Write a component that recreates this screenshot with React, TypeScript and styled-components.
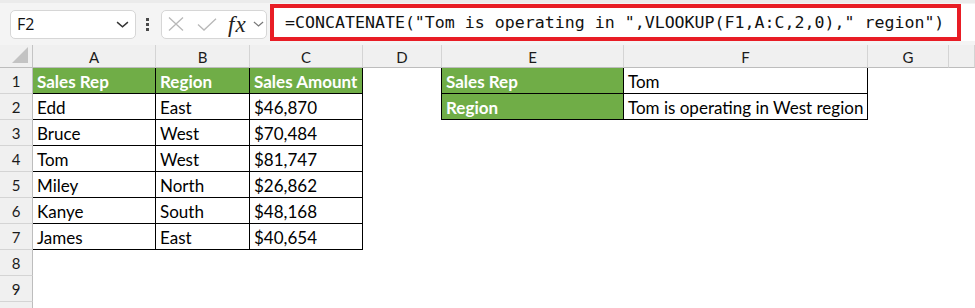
import styled, { createGlobalStyle } from "styled-components"

const GlobalStyle = createGlobalStyle`
  * { box-sizing: border-box; }
  body {
    margin: 0;
    background: #ffffff;
    font-family: "Lato", "Liberation Sans", sans-serif;
    overflow: hidden;
  }
`

const Toolbar = styled.div`
  height: 45px;
  display: flex;
  align-items: center;
  background: #f4f4f4;
  border-top: 3px solid #ebebeb;
`

const NameBox = styled.div`
  margin-left: 10px;
  width: 126px;
  height: 29px;
  background: #fff;
  border: 1px solid #d6d6d6;
  border-radius: 5px;
  display: flex;
  align-items: center;
  justify-content: space-between;
  padding: 0 6px 0 6px;
  font-family: "Open Sans", "Noto Sans", sans-serif;
  font-size: 16px;
  color: #111;
`

const Dots = styled.div`
  margin: 0 12px 0 10px;
  display: flex;
  flex-direction: column;
  gap: 2px;
  span {
    width: 3px;
    height: 3px;
    background: #4a4a4a;
  }
`

const FuncBox = styled.div`
  width: 106px;
  height: 29px;
  background: #fff;
  border: 1px solid #d6d6d6;
  border-radius: 5px;
  display: flex;
  align-items: center;
  padding-left: 6px;
`

const Fx = styled.span`
  font-family: "Liberation Serif", serif;
  font-style: italic;
  font-size: 23px;
  color: #222;
  margin: 0 6px 0 11px;
  line-height: 1;
  letter-spacing: 1px;
`

const FormulaArea = styled.div`
  margin-left: 3px;
  flex: 1;
  height: 37px;
  align-self: flex-start;
  margin-top: 1px;
  background: #fff;
`

const RedFrame = styled.div`
  width: 691px;
  height: 100%;
  border: 4px solid #e81d25;
  display: flex;
  align-items: center;
  padding-left: 11px;
  font-family: "DejaVu Sans Mono", monospace;
  font-size: 16.6px;
  color: #111;
  white-space: pre;
`

const Sheet = styled.div`
  display: grid;
  grid-template-columns: 33px 123px 94px 113px 79px 182px 244px 81px 1fr;
  grid-template-rows: 23px repeat(10, 26px);
`

const Corner = styled.div`
  background: #f0f0f0;
  border-right: 1px solid #c4c4c4;
  border-bottom: 1px solid #bdbdbd;
  display: flex;
  justify-content: flex-end;
  align-items: flex-end;
  padding: 0 4px 4px 0;
`

const ColHead = styled.div`
  background: #f0f0f0;
  border-right: 1px solid #d4d4d4;
  border-bottom: 1px solid #bdbdbd;
  display: flex;
  align-items: center;
  justify-content: center;
  font-size: 15px;
  color: #1b1b1b;
  padding-top: 1px;
`

const RowHead = styled.div`
  background: #f0f0f0;
  border-right: 1px solid #bdbdbd;
  border-bottom: 1px solid #d4d4d4;
  display: flex;
  align-items: flex-end;
  justify-content: center;
  font-size: 15px;
  color: #1b1b1b;
  padding-bottom: 3px;
`

const Cell = styled.div<{ $table?: boolean; $fill?: boolean; $left?: boolean }>`
  background: ${(p) => (p.$fill ? "#70ad47" : "#fff")};
  color: ${(p) => (p.$fill ? "#fff" : "#000")};
  font-weight: ${(p) => (p.$fill ? 700 : 400)};
  border-right: ${(p) => (p.$table ? "1px solid #000" : "none")};
  border-bottom: ${(p) => (p.$table ? "1px solid #000" : "none")};
  border-left: ${(p) => (p.$left ? "1px solid #000" : "none")};
  margin-left: ${(p) => (p.$left ? "-1px" : "0")};
  display: flex;
  align-items: flex-end;
  padding: 0 4px 1px 4px;
  font-size: 17px;
  line-height: 20px;
  white-space: nowrap;
  overflow: hidden;
`

const columns = ["A", "B", "C", "D", "E", "F", "G", ""]

const sales = [
  ["Sales Rep", "Region", "Sales Amount"],
  ["Edd", "East", "$46,870"],
  ["Bruce", "West", "$70,484"],
  ["Tom", "West", "$81,747"],
  ["Miley", "North", "$26,862"],
  ["Kanye", "South", "$48,168"],
  ["James", "East", "$40,654"],
]

const lookup = [
  ["Sales Rep", "Tom"],
  ["Region", "Tom is operating in West region"],
]

const formula = `=CONCATENATE("Tom is operating in ",VLOOKUP(F1,A:C,2,0)," region")`

const Chevron = ({ w, h, color }: { w: number; h: number; color: string }) => (
  <svg width={w} height={h} viewBox="0 0 12 6" fill="none">
    <path d="M1 0.8 L6 5.2 L11 0.8" stroke={color} strokeWidth="1.3" />
  </svg>
)

export default function App() {
  return (
    <>
      <GlobalStyle />
      <Toolbar>
        <NameBox>
          <span>F2</span>
          <Chevron w={13} h={7} color="#333" />
        </NameBox>
        <Dots>
          <span />
          <span />
          <span />
        </Dots>
        <FuncBox>
          <svg width="16" height="14" viewBox="0 0 16 14" fill="none">
            <path d="M1 0.5 L15 13.5 M15 0.5 L1 13.5" stroke="#b8b8b8" strokeWidth="1.3" />
          </svg>
          <svg width="20" height="13" viewBox="0 0 20 13" fill="none" style={{ marginLeft: 13 }}>
            <path d="M1 6.5 L7 12 L19 0.8" stroke="#b8b8b8" strokeWidth="1.3" />
          </svg>
          <Fx>fx</Fx>
          <Chevron w={11} h={6} color="#777" />
        </FuncBox>
        <FormulaArea>
          <RedFrame>{formula}</RedFrame>
        </FormulaArea>
      </Toolbar>
      <Sheet>
        <Corner>
          <svg width="16" height="16" viewBox="0 0 16 16">
            <polygon points="16,0 16,16 0,16" fill="#c3c3c3" />
          </svg>
        </Corner>
        {columns.map((c, i) => (
          <ColHead key={i}>{c}</ColHead>
        ))}
        {Array.from({ length: 10 }, (_, r) => {
          const s = sales[r]
          const l = lookup[r]
          return [
            <RowHead key={`h${r}`}>{r < 9 ? r + 1 : ""}</RowHead>,
            ...[0, 1, 2].map((c) => (
              <Cell key={`s${r}${c}`} $table={!!s} $fill={r === 0 && !!s}>
                {s ? s[c] : ""}
              </Cell>
            )),
            <Cell key={`d${r}`} />,
            <Cell key={`e${r}`} $table={!!l} $left={!!l} $fill={!!l}>
              {l ? l[0] : ""}
            </Cell>,
            <Cell key={`f${r}`} $table={!!l}>
              {l ? l[1] : ""}
            </Cell>,
            <Cell key={`g${r}`} />,
            <Cell key={`x${r}`} />,
          ]
        })}
      </Sheet>
    </>
  )
}
